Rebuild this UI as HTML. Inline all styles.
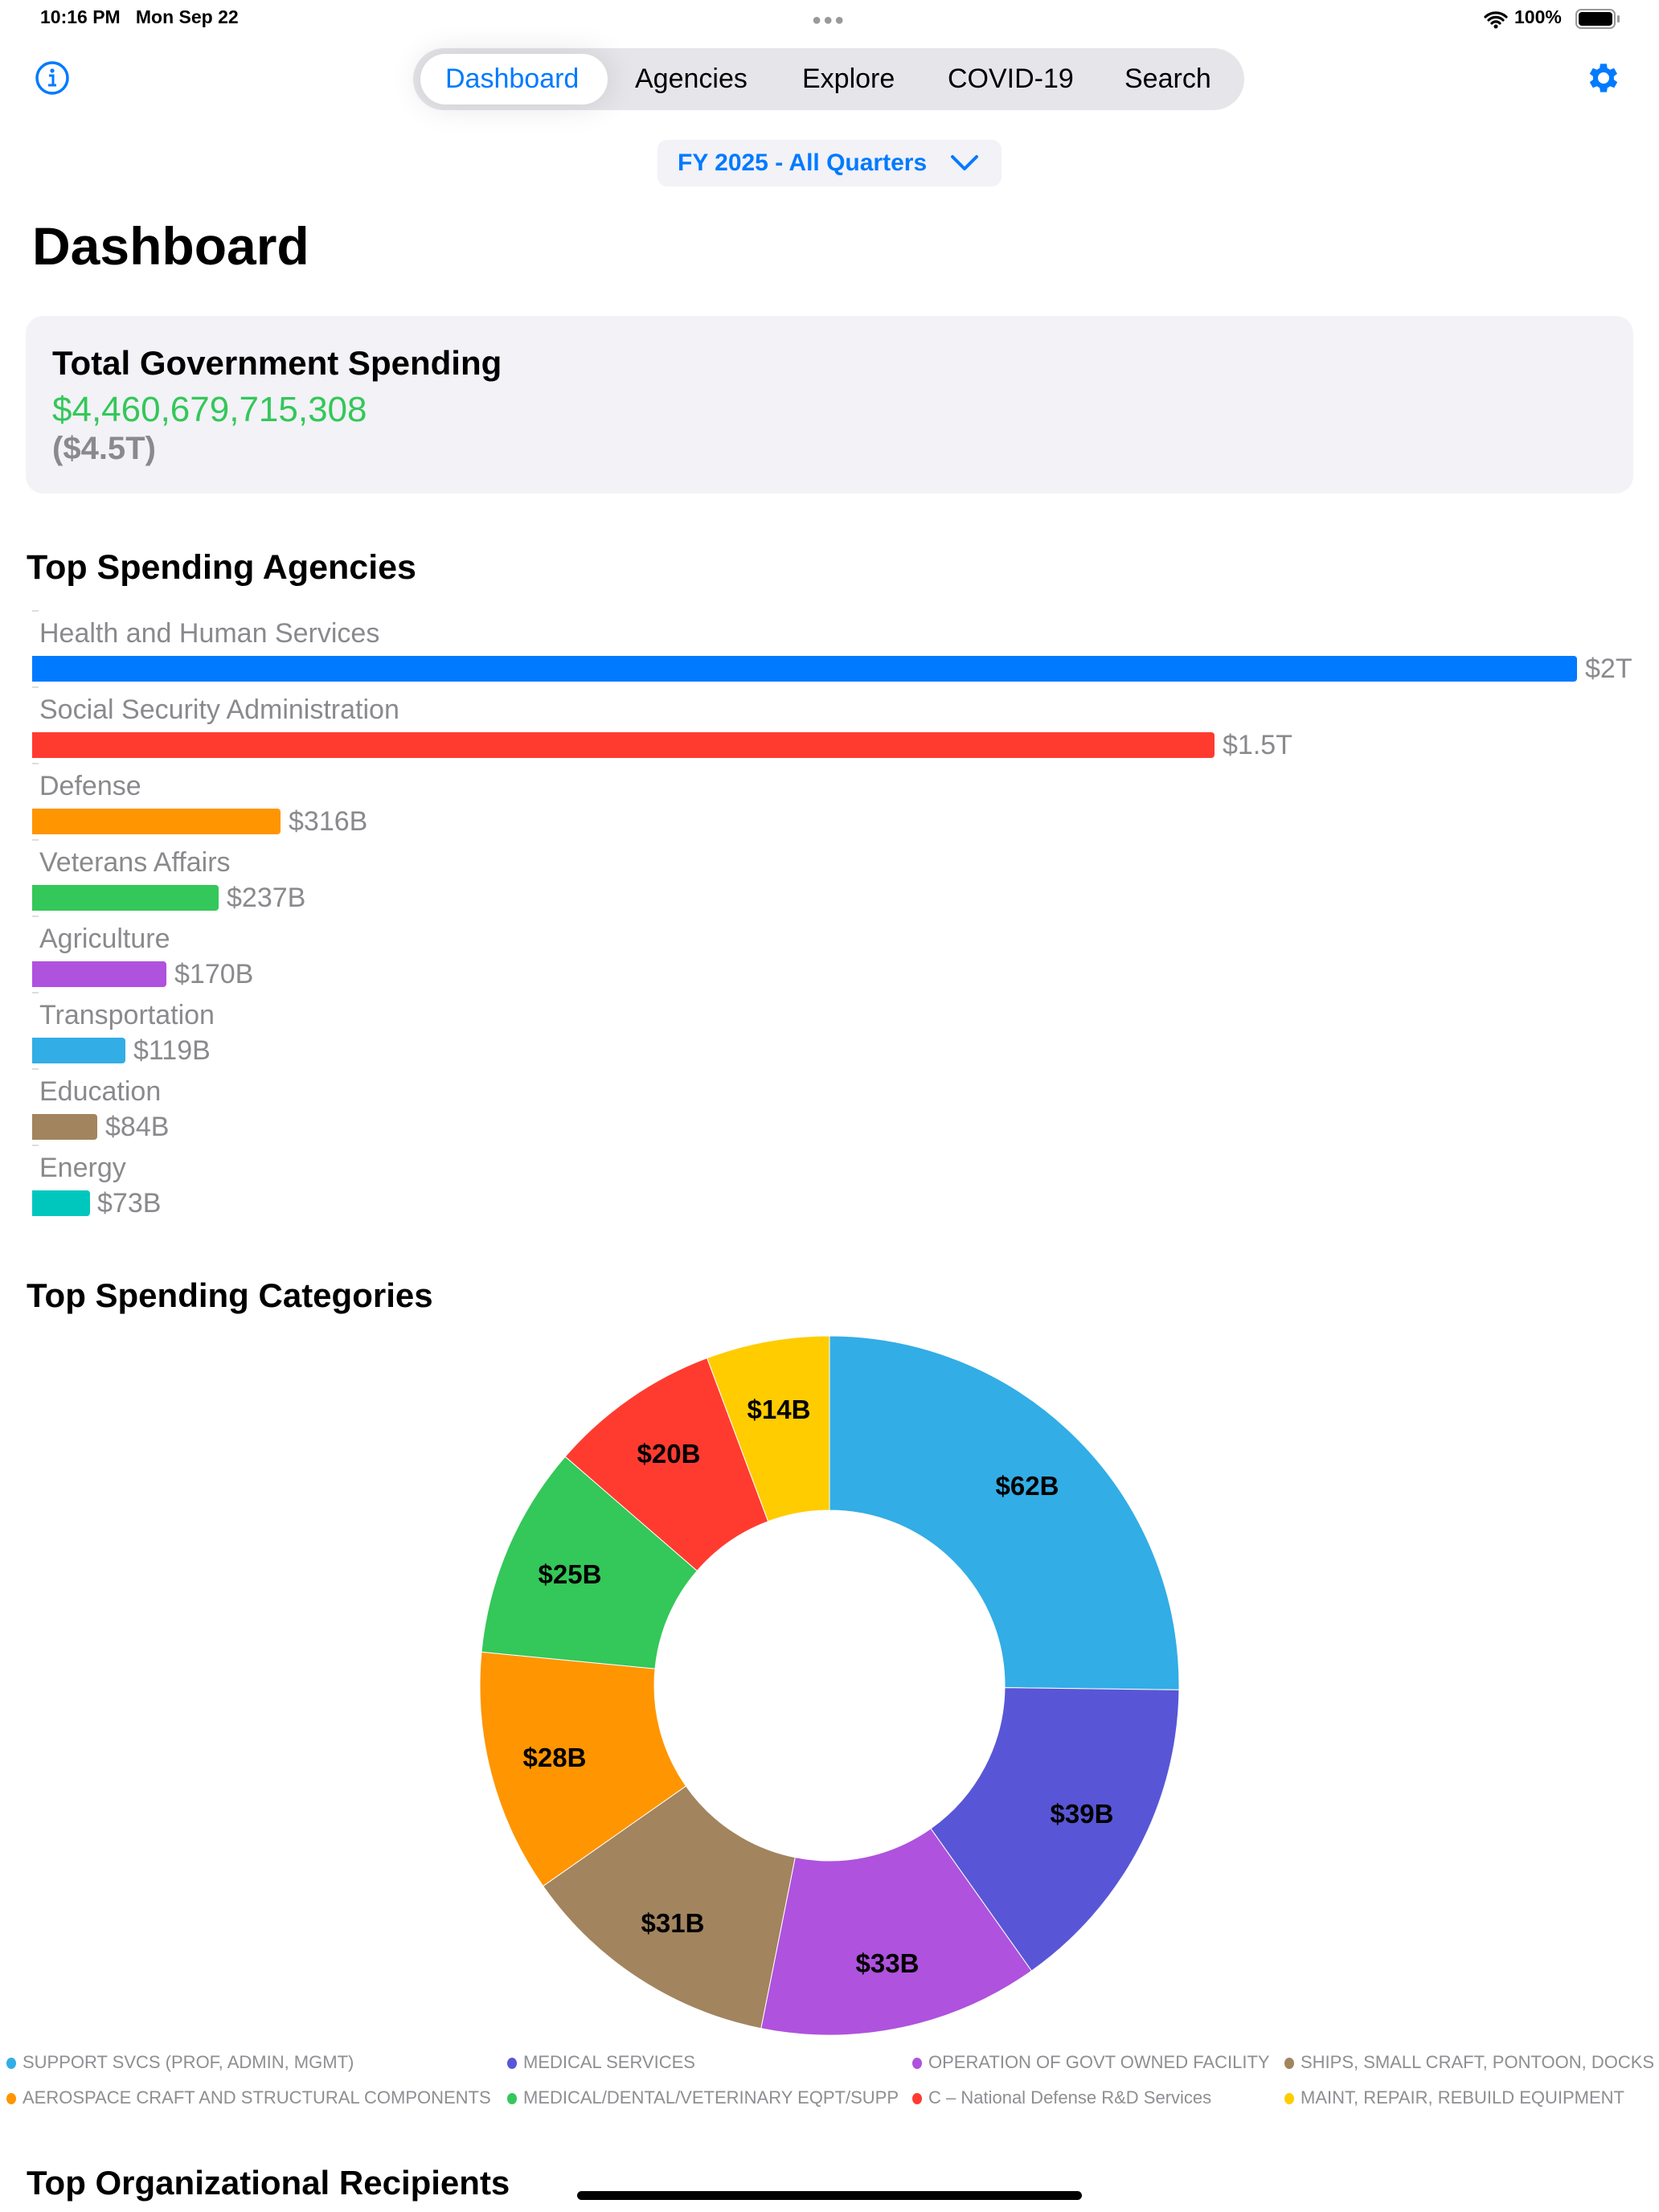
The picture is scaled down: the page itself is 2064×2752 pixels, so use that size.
<!DOCTYPE html>
<html><head><meta charset="utf-8">
<style>
*{margin:0;padding:0;box-sizing:border-box}
body{width:2064px;height:2752px;background:#fff;font-family:"Liberation Sans",sans-serif;position:relative;overflow:hidden;color:#000}
.a{position:absolute;white-space:nowrap}
.lbl{position:absolute;left:49px;font-size:34px;color:#8a8a8e;line-height:40px}
.bar{position:absolute;left:40px;height:32px;border-radius:0 4px 4px 0}
.val{position:absolute;font-size:34px;color:#8a8a8e;line-height:40px}
.tick{position:absolute;left:40px;width:8px;height:2px;background:#ddd}
.lg{position:absolute;font-size:22px;color:#8e8e93;line-height:26px;white-space:nowrap}
.lg i{position:absolute;left:-20px;top:7px;width:12px;height:14px;border-radius:50%}
</style></head><body>
<div class="a" style="left:50px;top:8px;font-size:23px;font-weight:bold;">10:16 PM&nbsp;&nbsp;&nbsp;Mon Sep 22</div>
<div class="a" style="left:1010px;top:14px;font-size:20px;color:#999;letter-spacing:2px">●●●</div>
<svg class="a" style="left:1846px;top:12px" width="30" height="24" viewBox="0 0 30 24"><path d="M2 9a19 19 0 0 1 26 0M6 13a13 13 0 0 1 18 0M10 17a7 7 0 0 1 10 0" stroke="#000" stroke-width="3.2" fill="none" stroke-linecap="round"/><circle cx="15" cy="21" r="2.5"/></svg>
<div class="a" style="left:1884px;top:8px;font-size:23px;font-weight:bold">100%</div>
<div class="a" style="left:1960px;top:11px;width:50px;height:25px;border:2px solid #999;border-radius:7px;padding:2px"><div style="width:100%;height:100%;background:#000;border-radius:4px"></div></div>
<div class="a" style="left:2012px;top:19px;width:3px;height:9px;background:#999;border-radius:2px"></div>

<svg class="a" style="left:43px;top:75px" width="44" height="44" viewBox="0 0 44 44"><circle cx="22" cy="22" r="19" stroke="#007aff" stroke-width="3.5" fill="none"/><circle cx="22" cy="13" r="2.6" fill="#007aff"/><path d="M18 19h5v12M17 31h10" stroke="#007aff" stroke-width="3" fill="none"/></svg>
<svg class="a" style="left:1971px;top:73px" width="48" height="48" viewBox="0 0 24 24"><path fill="#007aff" d="M19.4 13a7.6 7.6 0 0 0 0-2l2.1-1.6-2-3.5-2.5 1a7.4 7.4 0 0 0-1.7-1L15 3.2h-4l-.4 2.7a7.4 7.4 0 0 0-1.7 1l-2.5-1-2 3.5L6.5 11a7.6 7.6 0 0 0 0 2l-2.1 1.6 2 3.5 2.5-1a7.4 7.4 0 0 0 1.7 1l.4 2.7h4l.4-2.7a7.4 7.4 0 0 0 1.7-1l2.5 1 2-3.5zM13 15.5a3.5 3.5 0 1 1 0-7 3.5 3.5 0 0 1 0 7z" transform="translate(-1 0)"/></svg>

<div class="a" style="left:514px;top:60px;width:1034px;height:77px;background:#e5e5ea;border-radius:39px"></div>
<div class="a" style="left:523px;top:67px;width:233px;height:63px;background:#fff;border-radius:32px;box-shadow:0 0 40px rgba(0,0,0,.12)"></div>
<div class="a" style="left:554px;top:78px;font-size:34px;color:#007aff;line-height:40px">Dashboard</div>
<div class="a" style="left:790px;top:78px;font-size:34px;line-height:40px">Agencies</div>
<div class="a" style="left:998px;top:78px;font-size:34px;line-height:40px">Explore</div>
<div class="a" style="left:1179px;top:78px;font-size:34px;line-height:40px">COVID-19</div>
<div class="a" style="left:1399px;top:78px;font-size:34px;line-height:40px">Search</div>

<div class="a" style="left:818px;top:174px;width:428px;height:58px;background:#f2f2f7;border-radius:12px"></div>
<div class="a" style="left:843px;top:186px;font-size:30px;color:#007aff;font-weight:bold;line-height:34px">FY 2025 - All Quarters</div>
<svg class="a" style="left:1182px;top:192px" width="36" height="22" viewBox="0 0 36 22"><path d="M3 3l15 15L33 3" stroke="#007aff" stroke-width="4" fill="none" stroke-linecap="round" stroke-linejoin="round"/></svg>

<div class="a" style="left:40px;top:266px;font-size:66px;font-weight:bold;line-height:80px">Dashboard</div>

<div class="a" style="left:32px;top:393px;width:2000px;height:221px;background:#f2f2f7;border-radius:22px"></div>
<div class="a" style="left:65px;top:428px;font-size:42px;font-weight:bold;line-height:48px">Total Government Spending</div>
<div class="a" style="left:65px;top:485px;font-size:44px;color:#34c759;line-height:50px">$4,460,679,715,308</div>
<div class="a" style="left:65px;top:535px;font-size:40px;color:#8a8a8e;font-weight:bold;line-height:46px">($4.5T)</div>

<div class="a" style="left:33px;top:681px;font-size:43px;font-weight:bold;line-height:50px">Top Spending Agencies</div>

<div class="tick" style="top:759px"></div>
<div class="lbl" style="top:768px">Health and Human Services</div>
<div class="bar" style="top:816px;width:1922px;background:#007aff"></div>
<div class="val" style="left:1972px;top:812px">$2T</div>

<div class="tick" style="top:854px"></div>
<div class="lbl" style="top:863px">Social Security Administration</div>
<div class="bar" style="top:911px;width:1471px;background:#ff3b30"></div>
<div class="val" style="left:1521px;top:907px">$1.5T</div>

<div class="tick" style="top:949px"></div>
<div class="lbl" style="top:958px">Defense</div>
<div class="bar" style="top:1006px;width:309px;background:#ff9500"></div>
<div class="val" style="left:359px;top:1002px">$316B</div>

<div class="tick" style="top:1044px"></div>
<div class="lbl" style="top:1053px">Veterans Affairs</div>
<div class="bar" style="top:1101px;width:232px;background:#34c759"></div>
<div class="val" style="left:282px;top:1097px">$237B</div>

<div class="tick" style="top:1139px"></div>
<div class="lbl" style="top:1148px">Agriculture</div>
<div class="bar" style="top:1196px;width:167px;background:#af52de"></div>
<div class="val" style="left:217px;top:1192px">$170B</div>

<div class="tick" style="top:1234px"></div>
<div class="lbl" style="top:1243px">Transportation</div>
<div class="bar" style="top:1291px;width:116px;background:#32ade6"></div>
<div class="val" style="left:166px;top:1287px">$119B</div>

<div class="tick" style="top:1329px"></div>
<div class="lbl" style="top:1338px">Education</div>
<div class="bar" style="top:1386px;width:81px;background:#a2845e"></div>
<div class="val" style="left:131px;top:1382px">$84B</div>

<div class="tick" style="top:1424px"></div>
<div class="lbl" style="top:1433px">Energy</div>
<div class="bar" style="top:1481px;width:72px;background:#00c7be"></div>
<div class="val" style="left:121px;top:1477px">$73B</div>

<div class="a" style="left:33px;top:1587px;font-size:42px;font-weight:bold;line-height:50px">Top Spending Categories</div>

<svg class="a" id="donut" style="left:0;top:0" width="2064" height="2752">
<g font-family="Liberation Sans, sans-serif" font-size="33" font-weight="bold" text-anchor="middle" fill="#000">
<text x="1278" y="1860">$62B</text>
<text x="1346" y="2268">$39B</text>
<text x="1104" y="2454">$33B</text>
<text x="837" y="2404">$31B</text>
<text x="690" y="2198">$28B</text>
<text x="709" y="1970">$25B</text>
<text x="832" y="1820">$20B</text>
<text x="969" y="1765">$14B</text>
</g>
</svg>
<script>
(function(){
var cx=1032,cy=2097,R=435,r=218;
var b=[0,90.7,144.7,191.3,235,275.5,310.9,339.5,360];
var c=["#32ade6","#5856d6","#af52de","#a2845e","#ff9500","#34c759","#ff3b30","#ffcc00"];
function p(a,rad){a=a*Math.PI/180;return [cx+rad*Math.sin(a),cy-rad*Math.cos(a)];}
var s="";
for(var i=0;i<8;i++){var a0=b[i],a1=b[i+1],l=(a1-a0)>180?1:0;
var p0=p(a0,R),p1=p(a1,R),q1=p(a1,r),q0=p(a0,r);
s+='<path fill="'+c[i]+'" stroke="#fff" stroke-width="1" d="M'+p0+'A'+R+' '+R+' 0 '+l+' 1 '+p1+'L'+q1+'A'+r+' '+r+' 0 '+l+' 0 '+q0+'Z"/>';}
var g=document.getElementById('donut');g.innerHTML=s+g.innerHTML;
})();
</script>

<div class="lg" style="left:28px;top:2553px"><i style="background:#32ade6"></i>SUPPORT SVCS (PROF, ADMIN, MGMT)</div>
<div class="lg" style="left:651px;top:2553px"><i style="background:#5856d6"></i>MEDICAL SERVICES</div>
<div class="lg" style="left:1155px;top:2553px"><i style="background:#af52de"></i>OPERATION OF GOVT OWNED FACILITY</div>
<div class="lg" style="left:1618px;top:2553px"><i style="background:#a2845e"></i>SHIPS, SMALL CRAFT, PONTOON, DOCKS</div>
<div class="lg" style="left:28px;top:2597px"><i style="background:#ff9500"></i>AEROSPACE CRAFT AND STRUCTURAL COMPONENTS</div>
<div class="lg" style="left:651px;top:2597px"><i style="background:#34c759"></i>MEDICAL/DENTAL/VETERINARY EQPT/SUPP</div>
<div class="lg" style="left:1155px;top:2597px"><i style="background:#ff3b30"></i>C – National Defense R&amp;D Services</div>
<div class="lg" style="left:1618px;top:2597px"><i style="background:#ffcc00"></i>MAINT, REPAIR, REBUILD EQUIPMENT</div>

<div class="a" style="left:33px;top:2691px;font-size:42px;font-weight:bold;line-height:50px">Top Organizational Recipients</div>
<div class="a" style="left:718px;top:2726px;width:628px;height:11px;background:#000;border-radius:6px"></div>
</body></html>
